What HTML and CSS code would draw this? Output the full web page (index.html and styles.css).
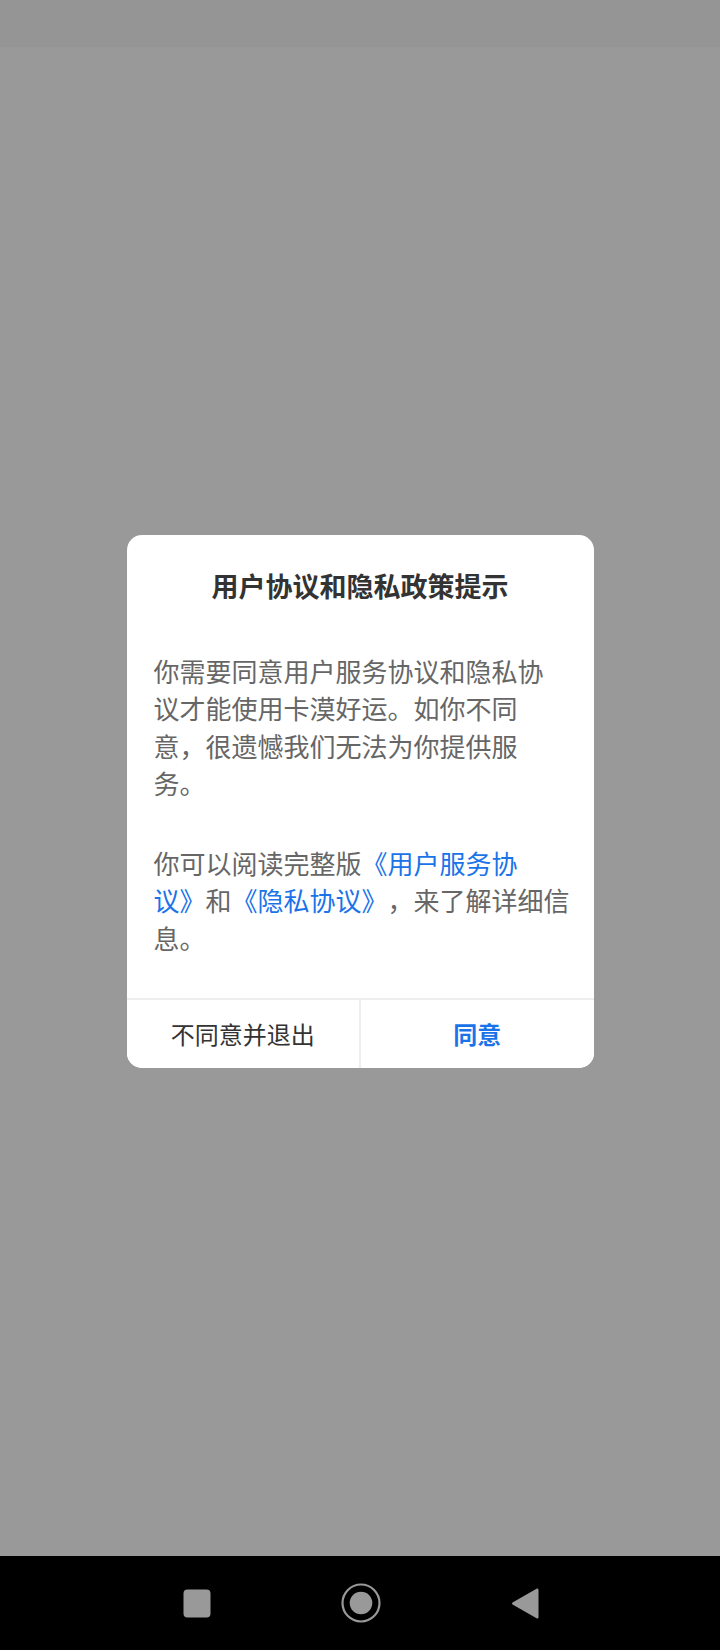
FILE: index.html
```html
<!DOCTYPE html>
<html lang="zh-CN">
<head>
    <meta charset="UTF-8">
    <meta name="viewport" content="width=device-width, initial-scale=1.0">
    <title>用户协议和隐私政策提示</title>
    <link rel="stylesheet" href="styles.css">
</head>
<body>
    <div class="status-bar"></div>

    <div class="screen">
        <div class="dialog">
            <h2 class="dialog-title">用户协议和隐私政策提示</h2>
            <div class="dialog-body">
                <p>你需要同意用户服务协议和隐私协<br>议才能使用卡漠好运。如你不同<br>意，很遗憾我们无法为你提供服<br>务。</p>
                <p>你可以阅读完整版<a href="#">《用户服务协<br>议》</a>和<a href="#">《隐私协议》</a>，来了解详细信<br>息。</p>
            </div>
            <div class="dialog-actions">
                <button class="btn-cancel">不同意并退出</button>
                <button class="btn-ok">同意</button>
            </div>
        </div>
    </div>

    <div class="nav-bar">
        <svg class="nav-icon" width="28" height="29" viewBox="0 0 28 29">
            <rect x="0.5" y="0.5" width="27" height="28" rx="4" fill="#999"/>
        </svg>
        <svg class="nav-icon" width="40" height="40" viewBox="0 0 40 40">
            <circle cx="20" cy="20" r="18.5" fill="none" stroke="#999" stroke-width="2.2"/>
            <circle cx="20" cy="20" r="11.3" fill="#999"/>
        </svg>
        <svg class="nav-icon" width="28" height="33" viewBox="0 0 28 33">
            <path d="M26 1.5 Q27.5 1 27.5 3 L27.5 30 Q27.5 32 26 31.5 L1.5 17.5 Q0.5 16.5 1.5 15.5 Z" fill="#999"/>
        </svg>
    </div>
</body>
</html>
```

FILE: styles.css
```css
:root {
    --screen-gray: #999999;
    --status-gray: #959595;
    --title-color: #333333;
    --body-color: #666666;
    --link-blue: #1a73e8;
    --line-color: #eeeeee;
}

* {
    box-sizing: border-box;
}

body {
    margin: 0;
    padding: 0;
    width: 720px;
    height: 1650px;
    display: flex;
    flex-direction: column;
    background-color: var(--screen-gray);
    font-family: "Noto Sans CJK SC", "Noto Sans", sans-serif;
    overflow: hidden;
}

.status-bar {
    height: 47px;
    background-color: var(--status-gray);
}

.screen {
    flex: 1;
    display: flex;
    justify-content: center;
    align-items: center;
}

.dialog {
    width: 467px;
    background-color: #fff;
    border-radius: 15px;
    overflow: hidden;
}

.dialog-title {
    margin: 0;
    padding-top: 32px;
    font-size: 27px;
    line-height: 37px;
    font-weight: bold;
    text-align: center;
    color: var(--title-color);
}

.dialog-body {
    padding: 48px 10px 42px 27px;
    font-size: 26px;
    line-height: 37.4px;
    color: var(--body-color);
    white-space: nowrap;
    text-spacing-trim: space-all;
}

.dialog-body p {
    margin: 0;
}

.dialog-body p + p {
    margin-top: 42px;
}

.dialog-body a {
    color: var(--link-blue);
    text-decoration: none;
}

.dialog-actions {
    display: flex;
    border-top: 2px solid var(--line-color);
}

.dialog-actions button {
    flex: 1;
    height: 68px;
    border: none;
    background: #fff;
    font-family: inherit;
    font-size: 24px;
    padding: 0;
    cursor: pointer;
}

.btn-cancel {
    color: var(--title-color);
    border-right: 2px solid var(--line-color) !important;
}

.btn-ok {
    color: var(--link-blue);
    font-weight: bold;
}

.nav-bar {
    height: 94px;
    background-color: #000;
    display: flex;
    justify-content: center;
    align-items: center;
    gap: 130px;
    padding-left: 2px;
}

.nav-icon {
    display: block;
}
```
